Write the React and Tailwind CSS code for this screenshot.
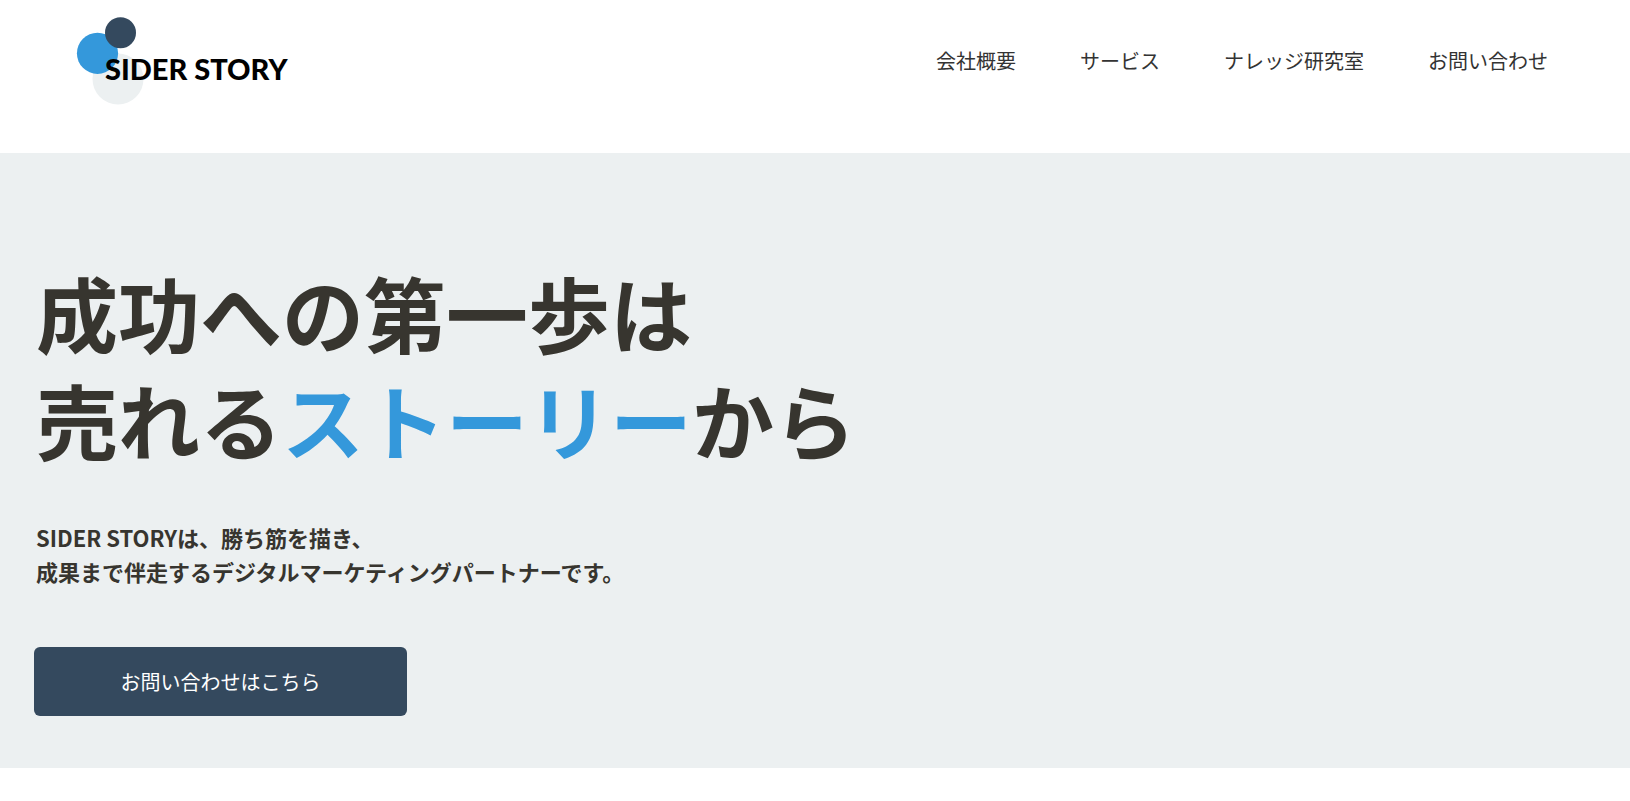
const navItems = [
  { label: '会社概要', href: '#company' },
  { label: 'サービス', href: '#service' },
  { label: 'ナレッジ研究室', href: '#knowledge' },
  { label: 'お問い合わせ', href: '#contact' },
];

function Logo() {
  return (
    <a href="#top" className="block shrink-0">
      <svg width="216" height="92" viewBox="0 0 216 92" role="img" aria-label="SIDER STORY">
        <circle cx="42" cy="63" r="25.5" fill="#ecf0f1" />
        <circle cx="21.5" cy="37.3" r="20.6" fill="#3498db" />
        <circle cx="44.5" cy="16.8" r="15.5" fill="#34495e" />
        <text x="29" y="64" className="font-['Lato',sans-serif] text-[29px] font-black" fill="#000">
          SIDER STORY
        </text>
      </svg>
    </a>
  );
}

function Header() {
  return (
    <header className="flex items-start justify-between bg-white pt-4 pr-[82px] pb-[45px] pl-[76px]">
      <Logo />
      <nav className="pt-[30px]">
        <ul className="flex gap-16">
          {navItems.map((item) => (
            <li key={item.href}>
              <a href={item.href} className="block text-xl leading-[30px] whitespace-nowrap text-[#333]">
                {item.label}
              </a>
            </li>
          ))}
        </ul>
      </nav>
    </header>
  );
}

function Hero() {
  return (
    <section className="bg-[#ecf0f1] px-[34px] pt-[105px] pb-[52px] text-[#37352f]">
      <div className="pl-[2px]">
        <h1 className="text-[82px] leading-[107px] font-bold">
          成功への第一歩は
          <br />
          売れる<span className="text-[#3498db]">ストーリー</span>から
        </h1>
        <p className="mt-12 text-[22px] leading-[34px] font-bold">
          SIDER STORYは、勝ち筋を描き、
          <br />
          成果まで伴走するデジタルマーケティングパートナーです。
        </p>
      </div>
      <a
        href="#contact"
        className="mt-[59px] flex h-[69px] w-full max-w-[373px] items-center justify-center rounded-md bg-[#34495e] text-xl text-white"
      >
        お問い合わせはこちら
      </a>
    </section>
  );
}

export default function App() {
  return (
    <div id="top" lang="ja" className="min-h-screen bg-white font-['Noto_Sans_CJK_JP',sans-serif]">
      <Header />
      <main>
        <Hero />
      </main>
    </div>
  );
}
